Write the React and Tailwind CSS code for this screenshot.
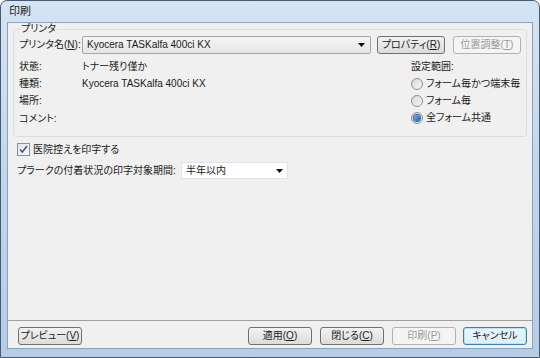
import React from 'react'

const FONT = "font-['Liberation_Sans','Noto_Sans_CJK_JP',sans-serif] [font-feature-settings:'palt']"

function Btn({ children, disabled, focused, className = '' }) {
  let look = 'border-[#707070] bg-gradient-to-b from-[#f2f2f2] to-[#dcdcdc] text-[#1a1a1a]'
  if (disabled) look = 'border-[#adb2b5] bg-[#f4f4f4] text-[#9a9a9a]'
  if (focused) look = 'border-[#3c7fb1] bg-gradient-to-b from-[#eaf6fd] to-[#d9f0fc] text-[#1a1a1a] shadow-[inset_0_0_0_1px_#b9e2f9]'
  return (
    <div
      className={`flex h-[18px] items-center justify-center rounded-[3px] border text-[10px] leading-none ${look} ${className}`}
    >
      {children}
    </div>
  )
}

function Arrow() {
  return (
    <svg width="7" height="4" viewBox="0 0 7 4" className="shrink-0">
      <path d="M0 0h7L3.5 4z" fill="#111" />
    </svg>
  )
}

function Radio({ checked, children }) {
  return (
    <div className="flex h-[17px] items-center gap-[3px]">
      <span className="flex h-[12px] w-[12px] items-center justify-center rounded-full border border-[#8e8f8f] bg-gradient-to-br from-[#d8d8d8] to-[#f6f6f6]">
        {checked && (
          <span className="h-[6px] w-[6px] rounded-full bg-gradient-to-br from-[#6cb4f0] to-[#1a5ea8] shadow-[0_0_0_1px_#2a64a8]" />
        )}
      </span>
      <span>{children}</span>
    </div>
  )
}

export default function App() {
  return (
    <div className={`${FONT} h-[358px] w-[540px] overflow-hidden whitespace-nowrap bg-white text-[10px] text-[#1a1a1a]`}>
      <div className="flex h-full flex-col rounded-t-[7px] border border-[#4b5a6b] bg-gradient-to-b from-[#d4e4f4] via-[#c0d6ee] to-[#b4cde8]">
        {/* title bar */}
        <div className="flex h-[21px] shrink-0 items-center pl-[8px] text-[11px] text-[#1e1e1e]">
          印刷
        </div>

        {/* client area */}
        <div className="mx-[6px] mb-[8px] flex flex-1 flex-col border border-[#8da2b8] bg-[#f0f0f0] px-[5px]">
          {/* printer group */}
          <fieldset className="h-[114px] rounded-[3px] border border-[#d5dfe5] px-[5px] pb-0">
            <legend className="ml-[1px] px-[1px] leading-[12px]">プリンタ</legend>

            <div className="flex h-[19px] items-center">
              <span className="w-[63px]">
                プリンタ名(<span className="underline">N</span>):
              </span>
              <div className="flex h-[18px] w-[289px] items-center justify-between rounded-[2px] border border-[#a5a5a5] bg-gradient-to-b from-[#f6f6f6] to-[#e6e6e6] pl-[4px] pr-[5px]">
                <span>Kyocera TASKalfa 400ci KX</span>
                <Arrow />
              </div>
              <Btn className="ml-[6px] w-[68px]">
                プロパティ(<span className="underline">R</span>)
              </Btn>
              <Btn disabled className="ml-[8px] w-[68px]">
                位置調整(<span className="underline">T</span>)
              </Btn>
            </div>

            <div className="mt-[4px] flex">
              <div className="flex flex-1 flex-col">
                <div className="flex h-[17px] items-center">
                  <span className="w-[63px]">状態:</span>
                  <span>トナー残り僅か</span>
                </div>
                <div className="flex h-[17px] items-center">
                  <span className="w-[63px]">種類:</span>
                  <span>Kyocera TASKalfa 400ci KX</span>
                </div>
                <div className="flex h-[17px] items-center">
                  <span className="w-[63px]">場所:</span>
                </div>
                <div className="flex h-[18px] items-center">
                  <span className="w-[63px]">コメント:</span>
                </div>
              </div>
              <div className="flex w-[110px] flex-col">
                <div className="flex h-[17px] items-center">設定範囲:</div>
                <Radio>フォーム毎かつ端末毎</Radio>
                <Radio>フォーム毎</Radio>
                <Radio checked>全フォーム共通</Radio>
              </div>
            </div>
          </fieldset>

          {/* options */}
          <div className="mt-[5px] flex h-[14px] items-center gap-[3px] pl-[4px]">
            <span className="flex h-[13px] w-[13px] items-center justify-center border border-[#8e8f8f] bg-gradient-to-br from-[#e4e4e4] to-[#fbfbfb]">
              <svg width="9" height="9" viewBox="0 0 9 9">
                <path d="M1 4.5l2.3 2.6L8 1" fill="none" stroke="#3e579a" strokeWidth="1.6" />
              </svg>
            </span>
            <span>医院控えを印字する</span>
          </div>
          <div className="mt-[6px] flex h-[17px] items-center pl-[4px]">
            <span className="w-[164px]">プラークの付着状況の印字対象期間:</span>
            <div className="flex h-[17px] w-[107px] items-center justify-between border border-[#e2e3ea] bg-white pl-[4px] pr-[4px]">
              <span>半年以内</span>
              <Arrow />
            </div>
          </div>

          <div className="flex-1" />

          {/* footer */}
          <div className="-mx-[5px] border-t border-[#a0a0a0]" />
          <div className="flex h-[27px] items-start pt-[6px]">
            <Btn className="ml-[5px] w-[64px]">
              プレビュー(<span className="underline">V</span>)
            </Btn>
            <div className="flex-1" />
            <Btn className="w-[64px]">
              適用(<span className="underline">O</span>)
            </Btn>
            <Btn className="ml-[8px] w-[64px]">
              閉じる(<span className="underline">C</span>)
            </Btn>
            <Btn disabled className="ml-[8px] w-[64px]">
              印刷(<span className="underline">P</span>)
            </Btn>
            <Btn focused className="ml-[7px] w-[64px]">
              キャンセル
            </Btn>
          </div>
        </div>
      </div>
    </div>
  )
}
